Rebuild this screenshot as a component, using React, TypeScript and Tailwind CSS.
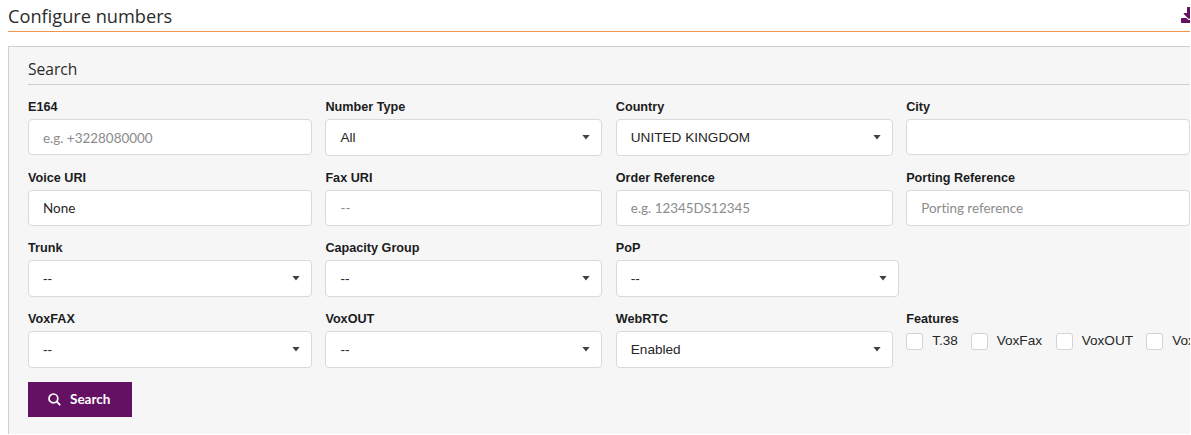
import { FaDownload } from "react-icons/fa";

type Field = {
  label: string;
  kind: "input" | "select";
  value?: string;
  placeholder?: string;
  wide?: boolean;
};

const _FIELDS: Field[] = [
  { label: "E164", kind: "input", placeholder: "e.g. +3228080000" },
  { label: "Number Type", kind: "select", value: "All" },
  { label: "Country", kind: "select", value: "UNITED KINGDOM" },
  { label: "City", kind: "input" },
  { label: "Voice URI", kind: "input", value: "None" },
  { label: "Fax URI", kind: "input", placeholder: "--" },
  { label: "Order Reference", kind: "input", placeholder: "e.g. 12345DS12345" },
  { label: "Porting Reference", kind: "input", placeholder: "Porting reference" },
  { label: "Trunk", kind: "select", value: "--" },
  { label: "Capacity Group", kind: "select", value: "--" },
  { label: "PoP", kind: "select", value: "--", wide: true },
  { label: "VoxFAX", kind: "select", value: "--" },
  { label: "VoxOUT", kind: "select", value: "--" },
  { label: "WebRTC", kind: "select", value: "Enabled" },
];

const _FEATURES = [
  { name: "T.38", width: "w-[64.5px]" },
  { name: "VoxFax", width: "w-[85px]" },
  { name: "VoxOUT", width: "w-[90.5px]" },
  { name: "Vox", width: "w-[85px]" },
];

function Label({ text }: { text: string }) {
  return (
    <div className="h-5 text-[12.65px] leading-[16px] font-bold whitespace-nowrap text-[#1b1c1d]">
      {text}
    </div>
  );
}

function FormField({ field }: { field: Field }) {
  return (
    <div className={field.wide ? "-mr-[6.6px]" : ""}>
      <Label text={field.label} />
      {field.kind === "select" ? (
        <div className="flex h-[37px] items-center justify-between rounded-[4px] border border-[#d9d9d9] bg-white pt-px pl-[14px] pr-[11px] text-[13.6px] text-[#262626]">
          <span>{field.value}</span>
          <svg width="8" height="5" viewBox="0 0 8 5" className="mb-[2px]">
            <path d="M0.4 0h7.2L4 4.4z" fill="#404040" />
          </svg>
        </div>
      ) : (
        <input
          type="text"
          defaultValue={field.value}
          placeholder={field.placeholder}
          className="block h-[36px] w-full rounded-[4px] border border-[#d9d9d9] bg-white px-[14px] pt-px font-['Lato',sans-serif] text-[13.45px] text-[#262626] outline-none [font-variant-ligatures:none] placeholder:text-[#8c8c8c]"
        />
      )}
    </div>
  );
}

export default function App() {
  return (
    <div className="h-[434px] w-[1190px] overflow-hidden bg-white font-['Liberation_Sans',Arial,sans-serif]">
      <div className="ml-2 flex h-[31px] items-center justify-between">
        <h1 className="pt-px font-['Open_Sans',sans-serif] text-[18.2px] leading-[31px] text-[#2b2b2b]">
          Configure numbers
        </h1>
        <FaDownload className="-mr-[7px] mt-[-2px] size-4 shrink-0 text-[#641164]" />
      </div>
      <div className="ml-2 h-px bg-[#f0954a]" />

      <div className="mt-[14px] ml-2 h-[388px] border-t border-l border-[#cfcfcf] bg-[#f6f6f6] pl-[19px]">
        <h2 className="h-[38px] border-b border-[#cfcfcf] pt-[10px] font-['Open_Sans',sans-serif] text-[15.6px] leading-6 text-[#2b2b2b]">
          Search
        </h2>

        <div className="mt-[14px] grid auto-rows-[70.7px] grid-cols-[284px_277px_277px_284px] gap-x-[13.4px]">
          {_FIELDS.map((field, index) => (
            <div key={field.label} className={index === 11 ? "col-start-1" : ""}>
              <FormField field={field} />
            </div>
          ))}
          <div className="overflow-hidden">
            <Label text="Features" />
            <div className="mt-[1px] flex">
              {_FEATURES.map((feature) => (
                <label
                  key={feature.name}
                  className={`flex shrink-0 text-[13.6px] leading-[17px] whitespace-nowrap text-[#262626] ${feature.width}`}
                >
                  <span className="mt-px mr-[9px] size-[17px] shrink-0 rounded-[3px] border border-[#d4d4d5] bg-white" />
                  {feature.name}
                </label>
              ))}
            </div>
          </div>
        </div>

        <button className="flex h-[35px] w-[104px] items-center bg-[#641164] pl-5 font-['Lato',sans-serif] text-[13.5px] font-bold text-white">
          <svg width="13" height="13" viewBox="0 0 13 13" className="mr-[9px]" fill="none" stroke="currentColor">
            <circle cx="5.4" cy="5.4" r="4.4" strokeWidth="1.7" />
            <path d="M8.7 8.7l3 3" strokeWidth="1.9" strokeLinecap="round" />
          </svg>
          Search
        </button>
      </div>
    </div>
  );
}
